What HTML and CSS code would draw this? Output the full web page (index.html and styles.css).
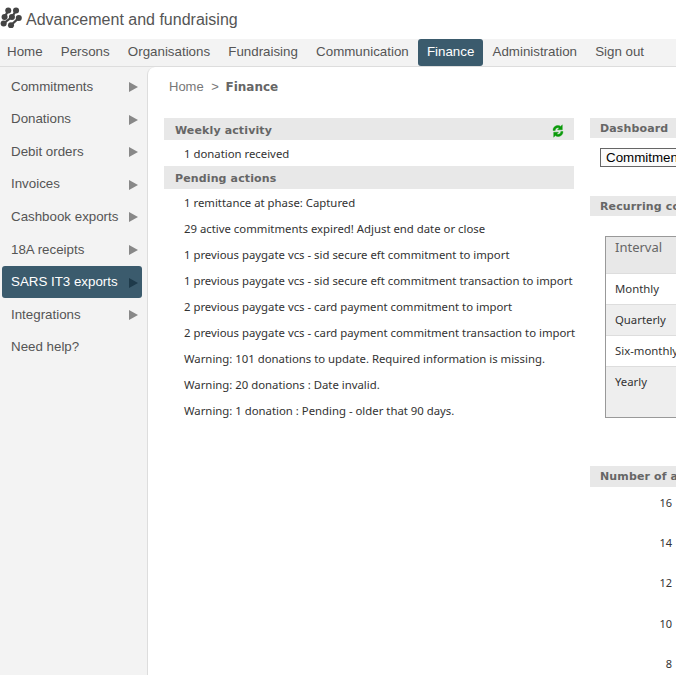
FILE: index.html
```html
<!DOCTYPE html>
<html lang="en">
<head>
    <meta charset="UTF-8">
    <meta name="viewport" content="width=device-width, initial-scale=1.0">
    <title>Finance</title>
    <link rel="stylesheet" href="styles.css">
</head>
<body>
    <header class="top">
        <svg class="logo" width="22" height="22" viewBox="0 0 24 24">
            <g fill="#444">
                <circle cx="9" cy="5" r="3.3"/>
                <circle cx="17.5" cy="5" r="3.3"/>
                <circle cx="5" cy="12" r="3.3"/>
                <circle cx="13" cy="12" r="3.3"/>
                <circle cx="20.5" cy="13" r="3.3"/>
                <circle cx="4" cy="19" r="3.3"/>
                <circle cx="12" cy="21" r="3.3"/>
            </g>
            <g stroke="#444" stroke-width="2.4">
                <path d="M9 5 L5 12"/>
                <path d="M17.5 5 L13 12"/>
                <path d="M20.5 13 L12 21"/>
                <path d="M13 12 L4 19"/>
            </g>
        </svg>
        <span class="app-title">Advancement and fundraising</span>
    </header>

    <nav class="menu">
        <a>Home</a>
        <a>Persons</a>
        <a>Organisations</a>
        <a>Fundraising</a>
        <a>Communication</a>
        <a class="active">Finance</a>
        <a>Administration</a>
        <a>Sign out</a>
    </nav>

    <div class="layout">
        <aside class="side">
            <a class="side-item">Commitments<i class="arrow"></i></a>
            <a class="side-item">Donations<i class="arrow"></i></a>
            <a class="side-item">Debit orders<i class="arrow"></i></a>
            <a class="side-item">Invoices<i class="arrow"></i></a>
            <a class="side-item">Cashbook exports<i class="arrow"></i></a>
            <a class="side-item">18A receipts<i class="arrow"></i></a>
            <a class="side-item active">SARS IT3 exports<i class="arrow"></i></a>
            <a class="side-item">Integrations<i class="arrow"></i></a>
            <a class="side-item">Need help?</a>
        </aside>

        <main class="content">
            <div class="crumbs">Home <span class="sep">&gt;</span> <b>Finance</b></div>
            <div class="columns">
                <section class="col-left">
                    <h3 class="head weekly">
                        Weekly activity
                        <svg class="refresh" width="12" height="14" viewBox="0 0 12 14">
                            <path d="M1 6.5 C1 3 3.5 1.5 6 1.5 C7.2 1.5 8 1.9 8.7 2.4 L10.3 .8 V5.8 H5.5 L7.2 4.1 C5.2 3 3.2 4.2 3.2 6.5 Z" fill="#0a9a0a" stroke="#0a9a0a" stroke-width=".4"/>
                            <path d="M11 7.5 C11 11 8.5 12.5 6 12.5 C4.8 12.5 4 12.1 3.3 11.6 L1.7 13.2 V8.2 H6.5 L4.8 9.9 C6.8 11 8.8 9.8 8.8 7.5 Z" fill="#0a9a0a" stroke="#0a9a0a" stroke-width=".4"/>
                        </svg>
                    </h3>
                    <p class="row">1 donation received</p>
                    <h3 class="head pending">Pending actions</h3>
                    <p class="row">1 remittance at phase: Captured</p>
                    <p class="row">29 active commitments expired! Adjust end date or close</p>
                    <p class="row">1 previous paygate vcs - sid secure eft commitment to import</p>
                    <p class="row">1 previous paygate vcs - sid secure eft commitment transaction to import</p>
                    <p class="row">2 previous paygate vcs - card payment commitment to import</p>
                    <p class="row">2 previous paygate vcs - card payment commitment transaction to import</p>
                    <p class="row">Warning: 101 donations to update. Required information is missing.</p>
                    <p class="row">Warning: 20 donations : Date invalid.</p>
                    <p class="row">Warning: 1 donation : Pending - older that 90 days.</p>
                </section>

                <section class="col-right">
                    <h3 class="head small">Dashboard</h3>
                    <select class="picker"><option>Commitments and donations</option></select>
                    <h3 class="head small recurring">Recurring commitments</h3>
                    <table class="intervals">
                        <tr class="th"><td>Interval</td></tr>
                        <tr class="r1"><td>Monthly</td></tr>
                        <tr class="alt"><td>Quarterly</td></tr>
                        <tr class="r1"><td>Six-monthly</td></tr>
                        <tr class="alt last"><td>Yearly</td></tr>
                    </table>
                    <h3 class="head small number">Number of active commitments</h3>
                    <div class="axis">
                        <span>16</span>
                        <span>14</span>
                        <span>12</span>
                        <span>10</span>
                        <span>8</span>
                    </div>
                </section>
            </div>
        </main>
    </div>
</body>
</html>
```

FILE: styles.css
```css
html, body {
    margin: 0;
    height: 675px;
    overflow: hidden;
    background-color: white;
}
body {
    font-family: "Liberation Sans", Arial, sans-serif;
    color: #555;
}

/* top bar */
.top {
    height: 39px;
    display: flex;
    align-items: center;
}
.logo {
    margin: 0 4px 5px 0;
}
.app-title {
    font-size: 16px;
    color: #555;
}

.menu {
    height: 27px;
    display: flex;
    background-color: #f3f3f3;
    border-bottom: 1px solid #ddd;
    font-size: 13.33px;
}
.menu a {
    padding: 0 9.1px 2px 9.1px;
    line-height: 25px;
    color: #555;
}
.menu a:first-child {
    padding-left: 7px;
}
.menu a.active {
    background-color: #3b5b6d;
    color: white;
    border-radius: 3px;
}

/* sidebar + content */
.layout {
    display: flex;
    height: 608px;
    background-color: #f3f3f3;
}
.side {
    width: 147px;
    flex: none;
    padding: 3px 5px 0 2px;
    box-sizing: border-box;
    font-size: 13.33px;
}
.side-item {
    display: flex;
    align-items: center;
    justify-content: space-between;
    height: 32.6px;
    padding: 0 4px .4px 9px;
    box-sizing: border-box;
    color: #555;
    border-radius: 3px;
}
.side-item.active {
    background-color: #3b5b6d;
    color: white;
}
.arrow {
    width: 0;
    height: 0;
    border-left: 9px solid #888;
    border-top: 5px solid transparent;
    border-bottom: 5px solid transparent;
    margin-top: 2px;
}
.side-item.active .arrow {
    border-left-color: #1e3a4a;
}
.content {
    flex: 1;
    background-color: white;
    border-left: 1px solid #ddd;
    border-top-left-radius: 8px;
    padding: 0 0 0 16px;
    min-width: 0;
}
.crumbs {
    height: 51px;
    line-height: 40px;
    padding-left: 5px;
    font-size: 13px;
    color: #777;
}
.crumbs .sep {
    margin: 0 3px 0 4px;
}
.crumbs b {
    color: #666;
    font-family: "DejaVu Sans", sans-serif;
    font-size: 12px;
}

.columns {
    display: flex;
    gap: 16px;
}
.col-left {
    width: 410px;
    flex: none;
}
.col-right {
    width: 400px;
    flex: none;
}
.head {
    margin: 0;
    height: 22px;
    box-sizing: border-box;
    padding: 2px 10px 0 11px;
    background-color: #e8e8e8;
    font-family: "DejaVu Sans", sans-serif;
    font-size: 11px;
    font-weight: bold;
    color: #666;
    letter-spacing: .13px;
    display: flex;
    justify-content: space-between;
    align-items: center;
    white-space: nowrap;
}
.head.weekly {
    padding-top: 3px;
}
.head.pending {
    height: 23px;
}
.head.small {
    height: 20px;
    padding-top: 0;
    padding-left: 10px;
    justify-content: flex-start;
}
.refresh {
    margin-top: 0;
}
.row {
    margin: 0;
    height: 26px;
    line-height: 28px;
    padding-left: 20px;
    font-family: "Noto Sans", sans-serif;
    font-size: 11.35px;
    color: #333;
    white-space: nowrap;
}

.picker {
    display: block;
    margin: 10px 0 0 10px;
    width: 200px;
    height: 19px;
    font-family: "Liberation Sans", sans-serif;
    font-size: 13.33px;
    color: black;
    background-color: #fbfbfb;
    border: 1px solid #666;
    padding: 0 0 0 1px;
}
.head.recurring {
    margin-top: 29px;
}
.intervals {
    display: block;
    margin: 20px 0 0 15px;
    width: 300px;
    height: 182px;
    box-sizing: border-box;
    border-spacing: 0;
    border: 1px solid #999;
    font-family: "Noto Sans", sans-serif;
    font-size: 11.35px;
    color: #333;
}
.intervals td {
    width: 298px;
    padding: 0 9px;
    vertical-align: top;
    border-bottom: 1px solid #ddd;
    line-height: 30px;
    box-sizing: border-box;
}
.intervals .th td {
    background-color: #e8e8e8;
    color: #666;
    height: 37px;
    font-size: 13px;
    line-height: 21px;
}
.intervals .r1 td {
    height: 31px;
}
.intervals .alt td {
    background-color: #eee;
    height: 31px;
}
.intervals .last td {
    height: 50px;
    border-bottom: 0;
}
.head.number {
    margin-top: 48px;
    height: 21px;
}
.axis {
    width: 82px;
    display: flex;
    flex-direction: column;
    align-items: flex-end;
    padding-top: 8px;
    font-family: "Noto Sans", sans-serif;
    font-size: 11px;
    color: #333;
}
.axis span {
    height: 40.2px;
    line-height: 15px;
}
```
